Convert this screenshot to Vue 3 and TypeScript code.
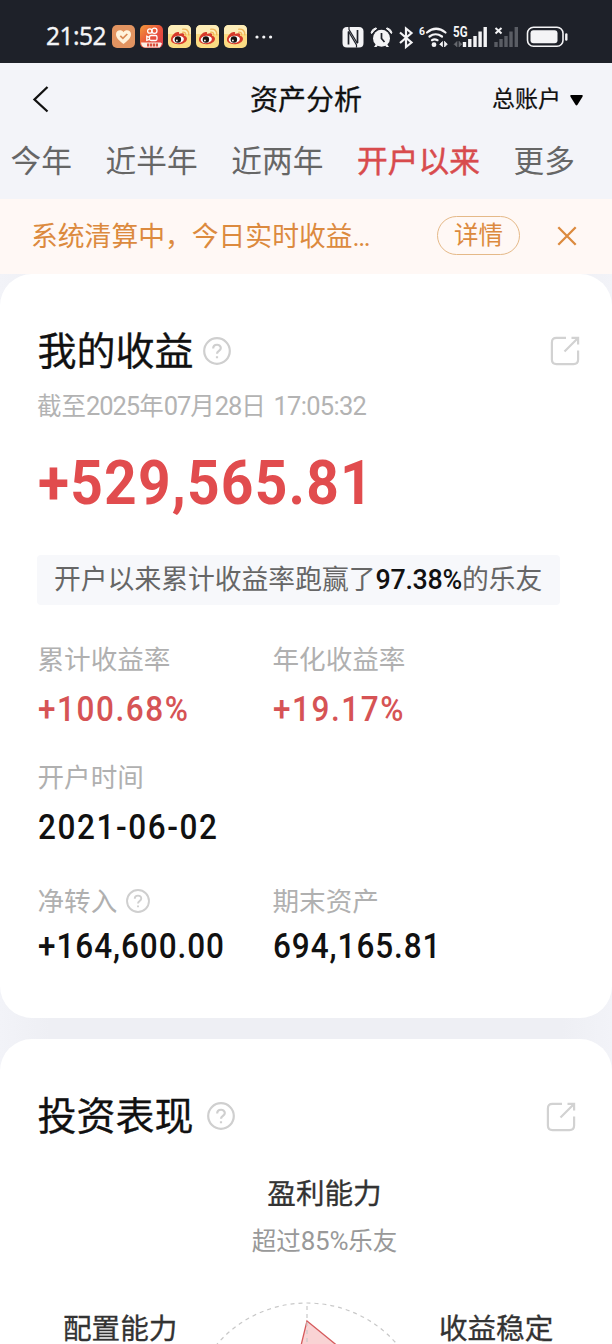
<script setup lang="ts">
interface Tab { label: string; active?: boolean }
interface Metric { label: string; value: string; tone?: 'gain'; help?: boolean; fit: string }

const tabs: Tab[] = [
  { label: '今年' },
  { label: '近半年' },
  { label: '近两年' },
  { label: '开户以来', active: true },
  { label: '更多' },
]

const rows: Metric[][] = [
  [
    { label: '累计收益率', value: '+100.68%', tone: 'gain', fit: 'loose' },
    { label: '年化收益率', value: '+19.17%', tone: 'gain', fit: 'loose' },
  ],
  [{ label: '开户时间', value: '2021-06-02', fit: 'loose' }],
  [
    { label: '净转入', value: '+164,600.00', help: true, fit: 'snug' },
    { label: '期末资产', value: '694,165.81', fit: 'snug' },
  ],
]
</script>

<template>
  <div class="page">
    <header class="status">
      <span class="clock">21:52</span>
      <div class="apps">
        <svg class="app" viewBox="0 0 23 23">
          <rect width="23" height="23" rx="5" fill="#e29461" />
          <path d="M11.5 19C7 15.500 4 13 4 9.300C4 5 9.500 4 11.500 7.300C13.500 4 19 5 19 9.300C19 13 16 15.500 11.500 19Z" fill="#fff3dc" />
          <path d="M8.300 10.800l2.600 2.500 4.400-4.300" fill="none" stroke="#d98a55" stroke-width="1.700" />
        </svg>
        <svg class="app" viewBox="0 0 23 23">
          <defs>
            <linearGradient id="ks" x1="0" y1="0" x2="1" y2="1">
              <stop offset="0" stop-color="#f29a3c" /><stop offset=".5" stop-color="#e9533a" /><stop offset="1" stop-color="#d93b4b" />
            </linearGradient>
          </defs>
          <rect width="23" height="23" rx="5" fill="url(#ks)" />
          <g fill="none" stroke="#fff" stroke-width="1.300">
            <circle cx="9.800" cy="6" r="2.200" /><circle cx="14.400" cy="5.800" r="2.600" />
            <rect x="9.500" y="10.500" width="7.500" height="5" rx="1.500" /><path d="M9.500 12.300l-2.700-1v4l2.700-1" />
          </g>
          <path d="M1 17.500h19.500l1.500 1-2 4H5.500Q1.500 22.500 1 17.500Z" fill="#fbeee4" />
          <path d="M7 20h11" stroke="#d9503f" stroke-width="3" stroke-dasharray="2.300 .7" />
        </svg>
        <svg v-for="n in 3" :key="n" class="app" viewBox="0 0 23 23">
          <rect width="23" height="23" rx="5" fill="#fbdc83" />
          <path d="M0 9V5Q0 0 5 0h13q5 0 5 5v4Z" fill="#fdedb8" />
          <path d="M3 14C3.500 10 8 6.200 10.500 7c.8.300.8 1.200.5 2 2-.8 5-1.300 5.200.6.100.7-.2 1.200-.2 1.200 2.300.5 3.500 2 2.800 4.200C17.500 18 13.500 19.300 10 19.200 6 19 2.500 17.200 3 14Z" fill="#d63a2b" />
          <ellipse cx="10.300" cy="14.400" rx="5.600" ry="3.700" fill="#fff" transform="rotate(-6 10.300 14.400)" />
          <circle cx="9.900" cy="14.500" r="3.200" fill="#17120f" /><circle cx="8.900" cy="15.500" r=".9" fill="#fff" />
          <path d="M14.800 7.200q3-.3 2.900 2.700M14.800 4.200q6.100-.5 6 5.700" fill="none" stroke="#efb55a" stroke-width="1.400" stroke-linecap="round" />
        </svg>
      </div>
      <svg class="dots" viewBox="0 0 18 4"><circle cx="2" cy="2" r="1.600" /><circle cx="8.800" cy="2" r="1.600" /><circle cx="15.600" cy="2" r="1.600" /></svg>
      <svg class="signals" viewBox="340 20 232 32">
        <g fill="#f4f4f6">
          <path d="M347 26h12q4.500 0 4.500 4.500v11.500q0 4.500-4.500 4.500h-12q-4.500 0-4.500-4.500v-11.500q0-4.500 4.500-4.500z" />
          <circle cx="381.500" cy="37.300" r="8.500" />
          <path d="M371.800 32.500a13 13 0 0 1 5-5l-1-.6q-4 1-4.800 5zM391.200 32.500a13 13 0 0 0-5-5l1-.6q4 1 4.800 5z" stroke="#f4f4f6" />
          <path d="M374 46l2-3 2 1.500-1.500 1.500zM389 46l-2-3-2 1.500 1.500 1.500z" />
        </g>
        <g fill="none" stroke="#1e2129" stroke-width="1.700">
          <path d="M348.500 43.500V30.500" /><path d="M357.500 29v13" />
          <path d="M349 26v2.500l8.500 14M348.500 30.500l8 13.500v2.500" stroke-width="1.200" />
          <path d="M381.500 32v5.500l3 3.500" />
        </g>
        <g fill="none" stroke="#f4f4f6" stroke-width="2.200">
          <path d="M400 31.500l11.500 10-5.500 4.500V27.500l5.500 4.500-11.500 10" />
          <path d="M427 31.500q9-7.500 18.500 0M429.500 35.500q6-4.500 12.500 0M432 39.200q2.500-1.500 5.500 0" stroke-width="2.200" stroke-linecap="round" />
        </g>
        <circle cx="434" cy="43.700" r="2.400" fill="#f4f4f6" />
        <path d="M439.500 43.500l3-3v5.500M444.500 40v6l3-3" fill="#f4f4f6" stroke="#f4f4f6" stroke-width=".7" />
        <text x="419" y="34" class="tiny" textLength="6" lengthAdjust="spacingAndGlyphs">6</text>
        <text x="453" y="36" class="tiny net" textLength="14.500" lengthAdjust="spacingAndGlyphs">5G</text>
        <path d="M454 43.500l3-3v5.500M459 40v6l3-3" fill="#686a70" stroke="#686a70" stroke-width=".7" />
        <path d="M464.500 46v-5M469.800 46v-8M475 46V35M480.100 46V30.500M485.200 46V26" class="bars" />
        <path d="M496 46v-5M501 46v-8M506 46V35M511 46V30.500M516.300 46V26" class="bars dim" />
        <path d="M495.500 27l6 5.500M501.500 27l-6 5.500" stroke="#f4f4f6" stroke-width="2" />
        <rect x="527.500" y="26.300" width="35.500" height="19" rx="6" fill="none" stroke="#f4f4f6" stroke-width="1.600" />
        <rect x="530.500" y="29.300" width="27" height="13" rx="3" fill="#f4f4f6" />
        <path d="M566.300 33.500v5" stroke="#f4f4f6" stroke-width="2.400" stroke-linecap="round" />
      </svg>
    </header>

    <nav class="top">
      <div class="titlebar">
        <svg class="back" viewBox="0 0 18 28"><path d="M15.500 2L2.500 14.500 15.500 26.500" /></svg>
        <h1>资产分析</h1>
        <button class="account">总账户<svg viewBox="0 0 14 12"><path d="M1.500 1h11q1.400.4.500 1.700L8 10.800q-1 1.200-2 0L1 2.700Q.2 1.400 1.500 1z" /></svg></button>
      </div>
      <div class="tabs">
        <span v-for="t in tabs" :key="t.label" class="tab" :class="{ active: t.active }">{{ t.label }}</span>
      </div>
    </nav>

    <div class="notice">
      <span class="message">系统清算中，今日实时收益…</span>
      <button class="detail">详情</button>
      <svg class="close" viewBox="0 0 20 20"><path d="M1.300 1.300l17.400 17.400M18.700 1.300L1.300 18.700" /></svg>
    </div>

    <main class="content">
      <section class="card earnings">
        <div class="head">
          <h2>我的收益</h2>
          <svg class="help" viewBox="0 0 28 28"><circle cx="14" cy="14" r="12.800" /><path d="M10.200 11.500c0-5 7.600-4.800 7.600-.5 0 2.900-3.800 2.900-3.800 5.800M14 19.200v2" /></svg>
          <svg class="share" viewBox="0 0 30 30"><path d="M16 1.900H6.500Q1.900 1.900 1.900 6.500V23.500Q1.900 28.100 6.500 28.100H23.500Q28.100 28.100 28.100 23.500V14.500M14.500 15.500L27.500 2.500M21.500 1.900h6.600v6.600" /></svg>
        </div>
        <p class="date">截至<b>2025</b>年<b>07</b>月<b>28</b>日<b class="time"> 17:05:32</b></p>
        <div class="total"><span>+529,565.81</span></div>
        <p class="beat">开户以来累计收益率跑赢了<b>97.38%</b>的乐友</p>
        <div v-for="(row, i) in rows" :key="i" class="metrics" :class="'row' + i">
          <div v-for="m in row" :key="m.label" class="metric">
            <div class="label">
              {{ m.label }}
              <svg v-if="m.help" class="help small" viewBox="0 0 28 28"><circle cx="14" cy="14" r="12.800" /><path d="M10.200 11.500c0-5 7.600-4.800 7.600-.5 0 2.900-3.800 2.900-3.800 5.800M14 19.200v2" /></svg>
            </div>
            <div class="value" :class="[m.tone, m.fit]">{{ m.value }}</div>
          </div>
        </div>
      </section>

      <section class="card performance">
        <div class="head">
          <h2>投资表现</h2>
          <svg class="help" viewBox="0 0 28 28"><circle cx="14" cy="14" r="12.800" /><path d="M10.200 11.500c0-5 7.600-4.800 7.600-.5 0 2.900-3.800 2.900-3.800 5.800M14 19.200v2" /></svg>
          <svg class="share" viewBox="0 0 30 30"><path d="M16 1.900H6.500Q1.900 1.900 1.900 6.500V23.500Q1.900 28.100 6.500 28.100H23.500Q28.100 28.100 28.100 23.500V14.500M14.500 15.500L27.500 2.500M21.500 1.900h6.600v6.600" /></svg>
        </div>
        <div class="ability">
          <strong>盈利能力</strong>
          <span>超过<b>85%</b>乐友</span>
        </div>
        <div class="radar">
          <strong>配置能力</strong>
          <svg viewBox="0 0 240 240">
            <circle cx="120" cy="120" r="119" class="ring" />
            <path d="M120 19L212 94L176 198L74 183L98 109Z" class="shape" />
            <path d="M120 120V1" class="ring" />
          </svg>
          <strong>收益稳定</strong>
        </div>
      </section>
    </main>
  </div>
</template>

<style>
body { margin: 0; background: #f3f4f9; }
</style>

<style scoped>
.page { width: 612px; height: 1344px; overflow: hidden; display: flex; flex-direction: column; background: #f3f4f9; color: #111; font-family: Roboto, "Noto Sans CJK SC", sans-serif; }
h1, h2, p { margin: 0; font-weight: 400; }
b, strong { font-weight: 400; }
button { font: inherit; background: none; border: 0; padding: 0; box-sizing: border-box; }
svg { display: block; flex: none; }

.status { height: 63px; flex: none; background: #1e2129; display: flex; align-items: center; padding: 10px 40px 0 46px; box-sizing: border-box; }
.clock { width: 66px; margin-top: -1px; color: #f4f4f6; font: 400 24.500px/30px "Noto Sans", sans-serif; letter-spacing: -.5px; white-space: nowrap; -webkit-text-stroke: .3px #f4f4f6; }
.apps { display: flex; gap: 5px; }
.app { width: 23px; height: 23px; }
.dots { width: 18px; height: 4px; margin-left: 8px; fill: #f4f4f6; }
.signals { width: 232px; height: 32px; margin-left: auto; }
.tiny { fill: #f4f4f6; font: 700 11.500px Roboto, sans-serif; }
.net { font-size: 14px; }
.bars { stroke: #f4f4f6; stroke-width: 3.400; fill: none; stroke-linecap: butt; }
.dim { stroke: #5a5d64; }

.top { height: 136px; flex: none; }
.titlebar { height: 70px; display: grid; grid-template-columns: 218px 176px 218px; align-items: center; }
.back { width: 18px; height: 28px; margin-left: 32px; margin-top: 2px; fill: none; stroke: #111; stroke-width: 2.300; }
h1 { font-size: 28px; line-height: 40px; margin-top: 5px; text-align: center; -webkit-text-stroke: .3px #111; }
.account { display: flex; align-items: center; justify-content: flex-end; gap: 8px; margin-top: 4px; padding-right: 28px; font-size: 23px; line-height: 40px; color: #111; -webkit-text-stroke: .2px #111; }
.account svg { width: 15px; height: 12px; margin-top: -1px; }
.tabs { display: flex; gap: 33.700px; padding-left: 10.500px; height: 57px; align-items: center; white-space: nowrap; }
.tab { font-size: 30.700px; line-height: 44px; color: #666; }
.tab.active { color: #d84b4d; -webkit-text-stroke: .5px #d84b4d; }

.notice { height: 75px; flex: none; background: #fff8f5; display: flex; align-items: center; color: #dc8a3e; padding: 0 35px 0 31px; box-sizing: border-box; }
.message { font-size: 26.800px; line-height: 40px; width: 406px; margin-top: 1px; white-space: nowrap; }
.detail { width: 83px; height: 39px; margin-top: -2px; border: 1px solid #e5b988; border-radius: 20px; color: inherit; font-size: 24.500px; line-height: 37px; }
.close { width: 20px; height: 20px; margin: -2px 0 0 auto; fill: none; stroke: #dc8a3e; stroke-width: 2.300; }

.content { display: flex; flex-direction: column; gap: 21px; background: linear-gradient(90deg, #f2f3f8, #eeeff4 50px, #eeeff4 562px, #f2f3f8); }
.card { background: #fff; border-radius: 32px; box-sizing: border-box; padding: 51px 32px 0 38px; flex: none; }
.earnings { height: 744px; }
.performance { height: 520px; }
.head { display: flex; align-items: center; height: 52px; }
h2 { font-size: 39px; line-height: 52px; margin: 2px 0 0 -.5px; white-space: nowrap; -webkit-text-stroke: .3px #111; }
.help { width: 28px; height: 28px; margin-left: 9px; fill: none; stroke: #cfcfcf; stroke-width: 2.200; }
.share { width: 30px; height: 30px; margin-left: auto; fill: none; stroke: #d2d2d2; stroke-width: 2.200; }
.date { height: 32px; margin: 13px 0 0 -1px; font-size: 24.500px; line-height: 32px; color: #b3b3b3; white-space: nowrap; }
.date b { font-size: 25.500px; letter-spacing: -1.050px; }
.date .time { letter-spacing: -.7px; word-spacing: 2px; }
.total { height: 70px; margin-top: 26px; line-height: 70px; font-size: 62px; font-weight: 700; color: #e14c4e; }
.total span { display: inline-block; letter-spacing: 1.300px; transform: scaleX(.918); transform-origin: 0 50%; }
.beat { width: 523px; height: 50px; margin: 37px 0 0 -1px; padding-left: 17px; box-sizing: border-box; background: #f7f8fb; border-radius: 4px; font-size: 26.800px; line-height: 51px; color: #666; white-space: nowrap; }
.beat b { color: #111; font-weight: 500; letter-spacing: -.3px; }
.metrics { display: grid; grid-template-columns: 235px 1fr; }
.label { display: flex; align-items: center; height: 40px; font-size: 26.600px; line-height: 40px; color: #b0b0b0; white-space: nowrap; margin-left: -.5px; }
.help.small { width: 24px; height: 24px; margin-top: -3px; }
.value { width: max-content; height: 46px; margin-top: 7px; font-size: 35px; line-height: 46px; font-weight: 500; color: #111; transform-origin: 0 50%; white-space: nowrap; transform: scaleX(.9); }
.value.gain { color: #d65355; }
.loose { letter-spacing: 1.750px; }
.snug { letter-spacing: 1.050px; }
.row0 { margin-top: 35px; }
.row1 { margin-top: 25px; }
.row2 { margin-top: 31px; }
.row2 .value { margin-top: 2px; }

.performance .help { margin-left: 13.500px; }
.performance .share { margin-right: 4px; margin-top: 2px; }
.ability { display: flex; flex-direction: column; align-items: center; margin: 31px 0 0 31px; width: 511px; }
strong { font-size: 28.600px; line-height: 42px; color: #333; -webkit-text-stroke: .3px #333; white-space: nowrap; }
.ability span { margin-top: 8px; font-size: 24.500px; line-height: 37px; color: #999; }
.ability b { font-size: 26px; letter-spacing: -.3px; }
.radar { display: flex; align-items: flex-start; margin: 42px 0 0 25px; }
.radar svg { width: 240px; height: 240px; margin: 0 12px 0 9.500px; }
.radar strong { line-height: 28px; margin-top: 13px; }
.ring { fill: none; stroke: #c8c8c8; stroke-width: 1.200; stroke-dasharray: 4 4; }
.shape { fill: #f9d3d4; stroke: #d65b5d; stroke-width: 1.300; }
</style>
